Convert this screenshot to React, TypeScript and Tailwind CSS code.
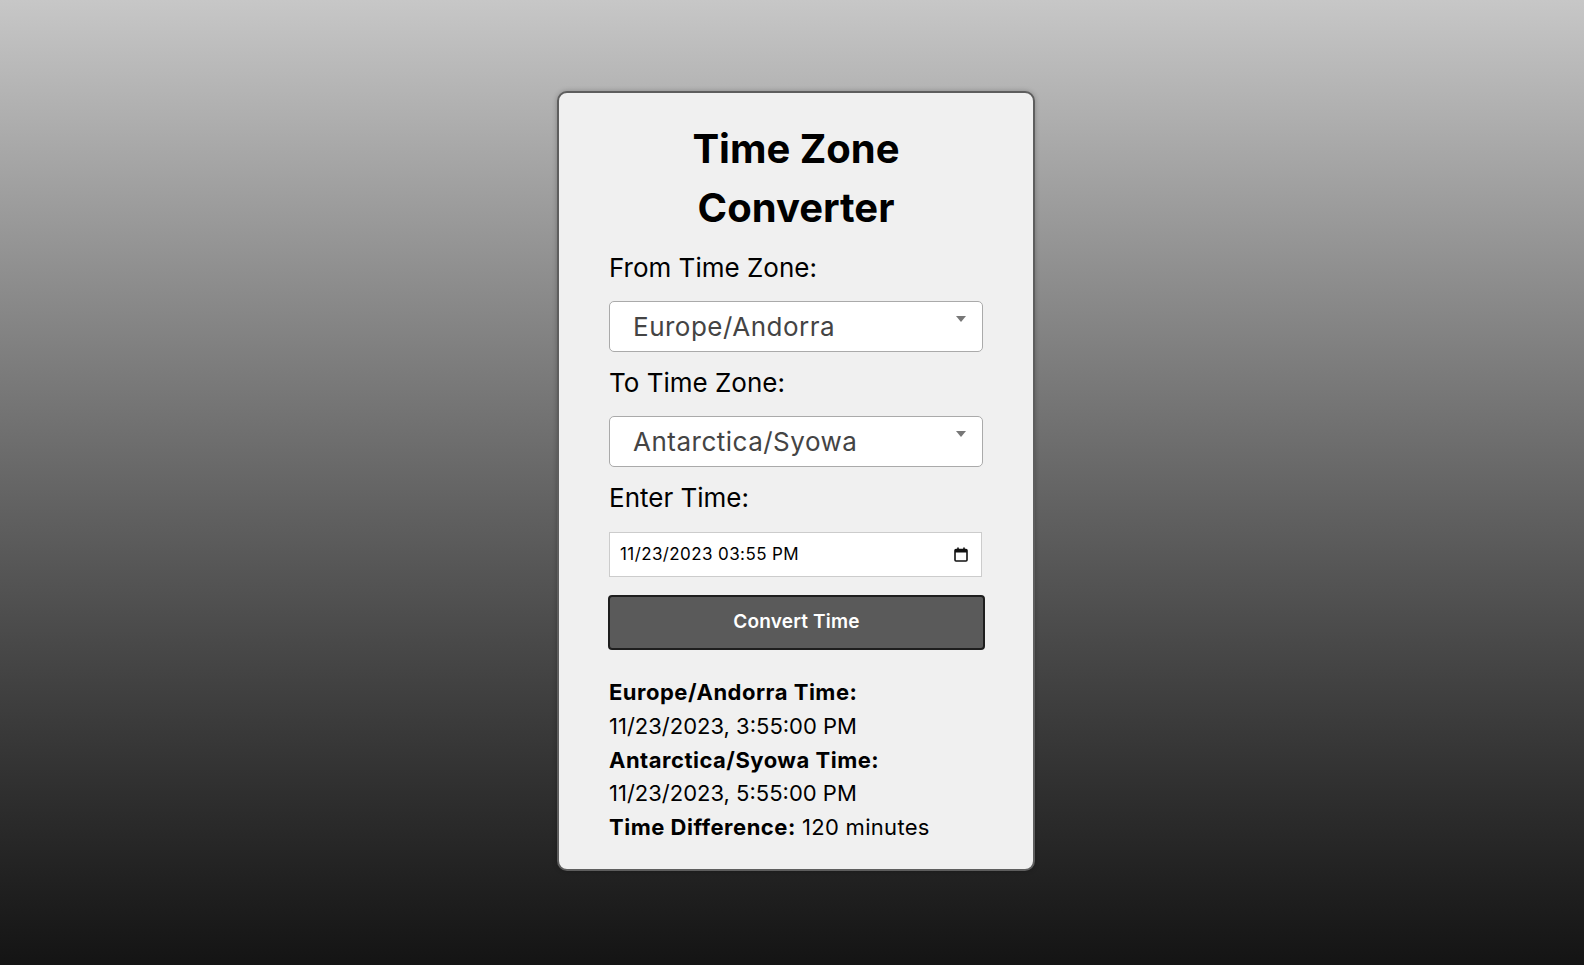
import React from 'react'

const FONT = { fontFamily: 'Inter, "Noto Sans", sans-serif' }

function Caret() {
  return (
    <span className="pointer-events-none absolute right-[17px] top-[15px] h-0 w-0 border-x-[5px] border-t-[6px] border-x-transparent border-t-[#777]" />
  )
}

function ZoneSelect({ value }: { value: string }) {
  return (
    <div className="relative">
      <select
        defaultValue={value}
        className="h-[51px] w-full appearance-none rounded-[5px] border border-[#aaa] bg-white pl-[23px] text-[26px] tracking-[0.5px] text-[#444] outline-none"
        style={FONT}
      >
        <option>{value}</option>
      </select>
      <Caret />
    </div>
  )
}

function CalendarIcon() {
  return (
    <svg width="14" height="15" viewBox="0 0 14 15" fill="none" className="shrink-0">
      <rect x="1" y="2.5" width="12" height="11.5" rx="1" stroke="#111" strokeWidth="1.6" />
      <rect x="1" y="2.5" width="12" height="3" fill="#111" />
      <rect x="3.2" y="0.5" width="1.6" height="3" fill="#111" />
      <rect x="9.2" y="0.5" width="1.6" height="3" fill="#111" />
    </svg>
  )
}

export default function App() {
  return (
    <div className="min-h-screen bg-gradient-to-b from-[#c7c7c7] to-[#141414]" style={FONT}>
      <div className="flex justify-center pl-[8px] pt-[91px] pb-[94px]">
        <div className="w-[478px] rounded-[10px] border-2 border-[#5e5e5e] bg-[#f0f0f0] px-[50px] pt-[26px] pb-[24px] shadow-[0_0_5px_rgba(0,0,0,0.25)]">
          <h1 className="text-center text-[40px] font-bold leading-[59px] text-black">
            Time Zone
            <br />
            Converter
          </h1>

          <label className="mt-[13px] block text-[26px] leading-[36px] text-black">From Time Zone:</label>
          <div className="mt-[15px]">
            <ZoneSelect value="Europe/Andorra" />
          </div>

          <label className="mt-[13px] block text-[26px] leading-[36px] text-black">To Time Zone:</label>
          <div className="mt-[15px]">
            <ZoneSelect value="Antarctica/Syowa" />
          </div>

          <label className="mt-[13px] block text-[26px] leading-[36px] text-black">Enter Time:</label>
          <div className="mt-[16px] mr-[1px] flex h-[45px] items-center border border-[#ccc] bg-white pl-[10px] pr-[13px]">
            <input
              type="text"
              readOnly
              value="11/23/2023 03:55 PM"
              className="min-w-0 flex-1 bg-transparent text-[17px] tracking-[0.4px] text-black outline-none"
              style={FONT}
            />
            <CalendarIcon />
          </div>

          <button
            className="mt-[18px] -ml-px h-[55px] w-[calc(100%+3px)] rounded-[4px] border-2 border-[#1e1e1e] bg-[#5a5a5a] text-[19px] font-semibold tracking-[0.2px] text-white"
            style={FONT}
          >
            Convert Time
          </button>

          <div className="mt-[26px] text-[22px] leading-[33.75px] text-black">
            <p className="font-bold tracking-[0.5px]">Europe/Andorra Time:</p>
            <p>11/23/2023, 3:55:00 PM</p>
            <p className="font-bold tracking-[0.5px]">Antarctica/Syowa Time:</p>
            <p>11/23/2023, 5:55:00 PM</p>
            <p>
              <span className="font-bold tracking-[0.5px]">Time Difference:</span>{' '}
              <span className="tracking-[0.3px]">120 minutes</span>
            </p>
          </div>
        </div>
      </div>
    </div>
  )
}
